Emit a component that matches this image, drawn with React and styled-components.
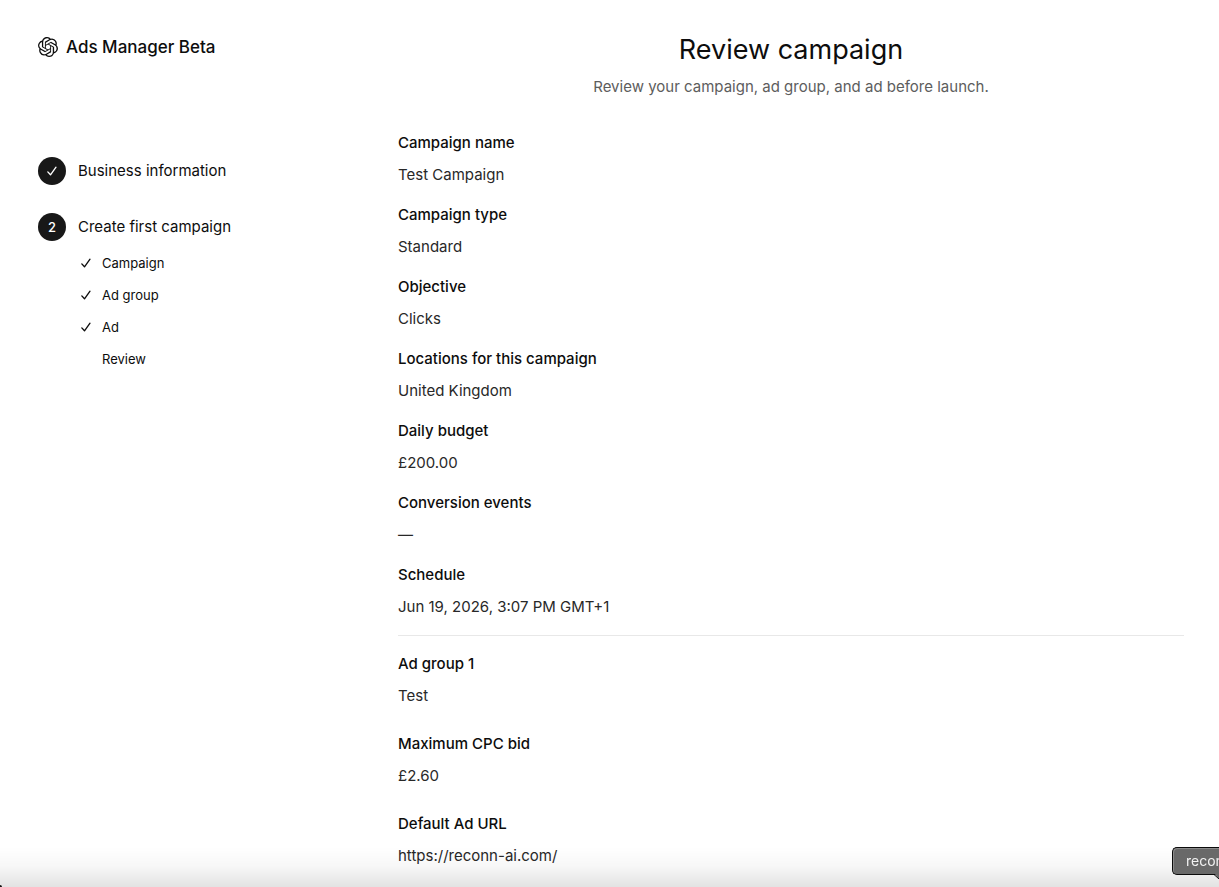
import React from "react";
import styled, { createGlobalStyle } from "styled-components";
import { SiOpenai } from "react-icons/si";

const GlobalStyle = createGlobalStyle`
  *, *::before, *::after { box-sizing: border-box; }
  html, body { margin: 0; background: #fff; }
  body {
    font-family: Inter, "Liberation Sans", sans-serif;
    font-size: 15px;
    line-height: 24px;
    color: #0d0d0d;
  }
  #root { overflow-x: clip; }
`;

const Page = styled.div`
  display: grid;
  grid-template-columns: 324px minmax(0, 1fr);
  column-gap: 36px;
  padding: 33px 35px 20px 38px;
`;

const Sidebar = styled.aside`
  display: flex;
  flex-direction: column;
  gap: 98px;
  padding-top: 2px;
`;

const Brand = styled.div`
  display: flex;
  align-items: center;
  gap: 8px;
  height: 24px;
  font-size: 17px;
  font-weight: 500;

  svg {
    width: 20px;
    height: 20px;
  }
`;

const Steps = styled.ol`
  display: flex;
  flex-direction: column;
  gap: 28px;
  margin: 0;
  padding: 0;
  list-style: none;
`;

const StepHeader = styled.div`
  display: flex;
  align-items: center;
  gap: 12px;
`;

const StepBadge = styled.span`
  display: flex;
  align-items: center;
  justify-content: center;
  width: 28px;
  height: 28px;
  border-radius: 50%;
  background: #181818;
  color: #fff;
  font-size: 13px;
  font-weight: 500;
`;

const SubSteps = styled.ul`
  display: flex;
  flex-direction: column;
  gap: 12px;
  margin: 12px 0 0;
  padding: 0 0 0 42px;
  list-style: none;
  font-size: 13px;
  line-height: 20px;
`;

const SubStep = styled.li`
  display: grid;
  grid-template-columns: 12px 1fr;
  align-items: center;
  column-gap: 10px;
`;

const SubStepLabel = styled.span`
  grid-column: 2;
`;

const Main = styled.main`
  display: flex;
  flex-direction: column;
`;

const PageHeader = styled.header`
  display: flex;
  flex-direction: column;
  gap: 8px;
  margin-bottom: 32px;
  text-align: center;
`;

const Title = styled.h1`
  margin: 0;
  font-size: 27px;
  line-height: 34px;
  font-weight: 400;
`;

const Subtitle = styled.p`
  margin: 0;
  color: #5d5d5d;
`;

const Details = styled.dl`
  display: flex;
  flex-direction: column;
  gap: ${({ $gap }) => $gap}px;
  margin: 0;
`;

const Field = styled.div`
  display: flex;
  flex-direction: column;
  gap: 8px;
`;

const Label = styled.dt`
  font-weight: 500;
`;

const Value = styled.dd`
  margin: 0;
  color: #282828;
`;

const Divider = styled.hr`
  width: 100%;
  height: 1px;
  margin: 16px 0;
  border: 0;
  background: #e8e8e8;
`;

const BottomShade = styled.div`
  position: fixed;
  inset: auto 0 0;
  height: 40px;
  background: linear-gradient(rgba(0, 0, 0, 0), rgba(0, 0, 0, 0.03) 50%, rgba(0, 0, 0, 0.115));
  pointer-events: none;

  &::before {
    content: "";
    position: absolute;
    left: 0;
    bottom: 0;
    width: 2px;
    height: 2px;
    border-top-right-radius: 2px;
    background: #111;
  }
`;

const DockLabel = styled.div`
  position: fixed;
  right: 0;
  bottom: 12px;
  width: 47px;
  height: 28px;
  padding-left: 13px;
  border: 1px solid #0b0b0b;
  border-right: 0;
  border-radius: 5px 0 0 5px;
  background: #696969;
  box-shadow: inset 1px 1px 0 #8b8b8b;
  color: #f2f2f2;
  font-size: 14px;
  line-height: 26px;
  white-space: nowrap;

  svg {
    position: absolute;
    right: 0;
    top: 25px;
    width: 5px;
    height: 6px;
  }
`;

const Check = () => (
  <svg width="12" height="12" viewBox="0 0 12 12" fill="none" aria-hidden="true">
    <path
      d="M1.8 6.9 4.5 9.8 10 2.2"
      stroke="currentColor"
      strokeWidth="1.35"
      strokeLinecap="round"
      strokeLinejoin="round"
    />
  </svg>
);

const subSteps = [
  { label: "Campaign", done: true },
  { label: "Ad group", done: true },
  { label: "Ad", done: true },
  { label: "Review", done: false },
];

const campaignFields = [
  ["Campaign name", "Test Campaign"],
  ["Campaign type", "Standard"],
  ["Objective", "Clicks"],
  ["Locations for this campaign", "United Kingdom"],
  ["Daily budget", "£200.00"],
  ["Conversion events", "—"],
  ["Schedule", "Jun 19, 2026, 3:07 PM GMT+1"],
];

const adGroupFields = [
  ["Ad group 1", "Test"],
  ["Maximum CPC bid", "£2.60"],
  ["Default Ad URL", "https://reconn-ai.com/"],
];

const FieldList = ({ fields, gap }) => (
  <Details $gap={gap}>
    {fields.map(([label, value]) => (
      <Field key={label}>
        <Label>{label}</Label>
        <Value>{value}</Value>
      </Field>
    ))}
  </Details>
);

export default function App() {
  return (
    <>
      <GlobalStyle />
      <Page>
        <Sidebar>
          <Brand>
            <SiOpenai aria-hidden="true" />
            <span>Ads Manager Beta</span>
          </Brand>
          <Steps>
            <li>
              <StepHeader>
                <StepBadge>
                  <Check />
                </StepBadge>
                <span>Business information</span>
              </StepHeader>
            </li>
            <li>
              <StepHeader>
                <StepBadge>2</StepBadge>
                <span>Create first campaign</span>
              </StepHeader>
              <SubSteps>
                {subSteps.map(({ label, done }) => (
                  <SubStep key={label}>
                    {done && <Check />}
                    <SubStepLabel>{label}</SubStepLabel>
                  </SubStep>
                ))}
              </SubSteps>
            </li>
          </Steps>
        </Sidebar>
        <Main>
          <PageHeader>
            <Title>Review campaign</Title>
            <Subtitle>Review your campaign, ad group, and ad before launch.</Subtitle>
          </PageHeader>
          <FieldList fields={campaignFields} gap={16} />
          <Divider />
          <FieldList fields={adGroupFields} gap={24} />
        </Main>
      </Page>
      <BottomShade />
      <DockLabel>
        recon
        <svg viewBox="0 0 5 6" aria-hidden="true">
          <path d="M0 0H5V6Z" fill="#696969" />
          <path d="M0 1.5 5 6" stroke="#0b0b0b" fill="none" />
        </svg>
      </DockLabel>
    </>
  );
}
